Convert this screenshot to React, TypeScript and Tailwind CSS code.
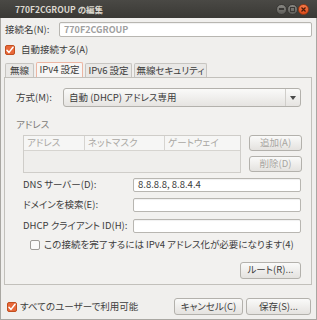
import React from "react";

const Check = ({ checked }: { checked: boolean }) =>
  checked ? (
    <span className="flex h-[10px] w-[10px] shrink-0 items-center justify-center rounded-[2px] border border-[#c14f1f] bg-[#e8683a]">
      <svg width="8" height="8" viewBox="0 0 8 8">
        <path d="M1 4.2 L3 6.4 L7 1.2" stroke="#ffffff" strokeWidth="1.5" fill="none" strokeLinecap="round" strokeLinejoin="round" />
      </svg>
    </span>
  ) : (
    <span className="block h-[10px] w-[10px] shrink-0 rounded-[2px] border border-[#9e9c98] bg-[#fbfbfa]" />
  );

const Btn = ({ children, disabled, className }: { children: React.ReactNode; disabled?: boolean; className?: string }) => (
  <div
    className={
      "flex items-center justify-center whitespace-nowrap rounded-[3px] border border-[#b3b1ac] bg-gradient-to-b from-[#fafaf9] to-[#e4e2df] " +
      (disabled ? "text-[#a8a6a2] " : "text-[#3c3c3c] ") +
      (className ?? "")
    }
  >
    {children}
  </div>
);

const Input = ({ children, className }: { children?: React.ReactNode; className?: string }) => (
  <div
    className={
      "flex items-center whitespace-nowrap rounded-[2px] border border-[#b8b6b1] bg-white pl-[4px] text-[#3c3c3c] shadow-[inset_0_1px_1px_rgba(0,0,0,0.06)] " +
      (className ?? "")
    }
  >
    {children}
  </div>
);

const WinBtn = ({ kind }: { kind: "min" | "max" | "close" }) => {
  if (kind === "close")
    return (
      <span className="flex h-[11px] w-[11px] items-center justify-center rounded-full border border-[#9a3a16] bg-gradient-to-b from-[#f57b4a] to-[#dd4a17]">
        <svg width="5" height="5" viewBox="0 0 5 5">
          <path d="M0.5 0.5 L4.5 4.5 M4.5 0.5 L0.5 4.5" stroke="#4a1a08" strokeWidth="1.2" />
        </svg>
      </span>
    );
  return (
    <span className="flex h-[11px] w-[11px] items-center justify-center rounded-full border border-[#3a3936] bg-gradient-to-b from-[#8a8984] to-[#5d5c58]">
      {kind === "min" ? (
        <span className="block h-[1.5px] w-[5px] bg-[#3a3936]" />
      ) : (
        <span className="block h-[5px] w-[5px] border border-[#3a3936]" />
      )}
    </span>
  );
};

const Tab = ({ children, active, w }: { children: React.ReactNode; active?: boolean; w: string }) => (
  <div
    className={
      "flex items-center justify-center whitespace-nowrap rounded-t-[2px] border border-b-0 " +
      (active ? "h-[15px] border-[#ecb6a3] bg-[#f7f6f5] " : "h-[14px] border-[#c7c5c1] bg-[#e9e8e6] ") +
      w
    }
  >
    {children}
  </div>
);

export default function App() {
  return (
    <div
      className="flex h-[320px] w-[317px] flex-col overflow-hidden bg-[#f0efed] text-[9.5px] leading-none text-[#3c3c3c] [font-feature-settings:'palt']"
      style={{ fontFamily: '"Noto Sans CJK JP", "Noto Sans", sans-serif' }}
    >
      {/* title bar */}
      <div className="flex h-[18px] shrink-0 items-center bg-gradient-to-b from-[#4a4945] to-[#3a3935] pl-[15px] pr-[8px]">
        <span className="text-[8.5px] font-bold text-[#dcd8cf]">770F2CGROUP の編集</span>
        <div className="ml-auto flex items-center">
          <WinBtn kind="min" />
          <WinBtn kind="max" />
          <WinBtn kind="close" />
        </div>
      </div>

      <div className="flex flex-1 flex-col border-x border-b border-[#a9a7a2] px-[3px]">
        {/* name row */}
        <div className="mt-[4px] flex h-[15px] items-center">
          <span className="w-[55px] pl-[1px]">接続名(N):</span>
          <Input className="mr-[1px] h-[15px] flex-1 text-[9px] font-semibold text-[#a0a0a0]">770F2CGROUP</Input>
        </div>

        {/* auto connect */}
        <div className="mt-[8px] flex h-[10px] items-center gap-[6px] pl-[1px]">
          <Check checked />
          <span>自動接続する(A)</span>
        </div>

        {/* tabs */}
        <div className="mt-[7px] flex h-[15px] items-end gap-[2px] pl-[1px]">
          <Tab w="w-[29px]">無線</Tab>
          <Tab active w="w-[47px]">IPv4 設定</Tab>
          <Tab w="w-[47px]">IPv6 設定</Tab>
          <Tab w="w-[73px]">無線セキュリティ</Tab>
        </div>

        {/* pane */}
        <div className="mr-[1px] flex h-[208px] flex-col border border-[#c2c0bb] bg-[#f2f1ef]">
          {/* method */}
          <div className="mt-[10px] flex h-[19px] items-center">
            <span className="w-[58px] pl-[11px]">方式(M):</span>
            <div className="flex h-[19px] w-[238px] items-center rounded-[3px] border border-[#b3b1ac] bg-gradient-to-b from-[#fafaf9] to-[#e6e4e1] pl-[5px]">
              <span>自動 (DHCP) アドレス専用</span>
              <span className="ml-auto flex h-full items-center border-l border-[#d0ceca] px-[4px]">
                <svg width="6" height="4" viewBox="0 0 6 4">
                  <path d="M0 0 L6 0 L3 4 Z" fill="#4a4a4a" />
                </svg>
              </span>
            </div>
          </div>

          {/* address */}
          <div className="mt-[13px] pl-[11px] text-[#7c7b78]">アドレス</div>

          <div className="mt-[5px] flex">
            <div className="ml-[18px] flex h-[38px] w-[218px] flex-col border border-[#cfcdc9] bg-[#efeeec]">
              <div className="flex h-[15px] border-b border-[#d6d4d0] bg-[#f6f6f5] text-[#a9a7a3]">
                <div className="flex w-[61px] items-center border-r border-[#d6d4d0] pl-[3px]">アドレス</div>
                <div className="flex w-[80px] items-center border-r border-[#d6d4d0] pl-[3px]">ネットマスク</div>
                <div className="flex flex-1 items-center pl-[3px]">ゲートウェイ</div>
              </div>
            </div>
            <div className="ml-[8px] flex flex-col gap-[5px]">
              <Btn disabled className="h-[16px] w-[53px]">追加(A)</Btn>
              <Btn disabled className="h-[16px] w-[53px]">削除(D)</Btn>
            </div>
          </div>

          {/* dns etc */}
          <div className="mt-[5px] flex h-[14px] items-center">
            <span className="w-[128px] pl-[18px]">DNS サーバー(D):</span>
            <Input className="h-[14px] w-[168px]">8.8.8.8, 8.8.4.4</Input>
          </div>
          <div className="mt-[6px] flex h-[14px] items-center">
            <span className="w-[128px] pl-[18px]">ドメインを検索(E):</span>
            <Input className="h-[14px] w-[168px]" />
          </div>
          <div className="mt-[7px] flex h-[14px] items-center">
            <span className="w-[128px] pl-[18px]">DHCP クライアント ID(H):</span>
            <Input className="h-[14px] w-[168px]" />
          </div>

          <div className="mt-[7px] flex h-[10px] items-center gap-[4px] pl-[25px]">
            <Check checked={false} />
            <span>この接続を完了するには IPv4 アドレス化が必要になります(4)</span>
          </div>

          <div className="mt-[12px] flex justify-end pr-[10px]">
            <Btn className="h-[17px] w-[61px]">ルート(R)...</Btn>
          </div>
        </div>

        {/* bottom */}
        <div className="mt-[13px] flex items-center">
          <div className="flex items-center gap-[3px] pl-[3px]">
            <Check checked />
            <span>すべてのユーザーで利用可能</span>
          </div>
          <div className="ml-auto flex gap-[3px] pr-[2px]">
            <Btn className="h-[17px] w-[69px]">キャンセル(C)</Btn>
            <Btn className="h-[17px] w-[65px]">保存(S)...</Btn>
          </div>
        </div>
      </div>
    </div>
  );
}
